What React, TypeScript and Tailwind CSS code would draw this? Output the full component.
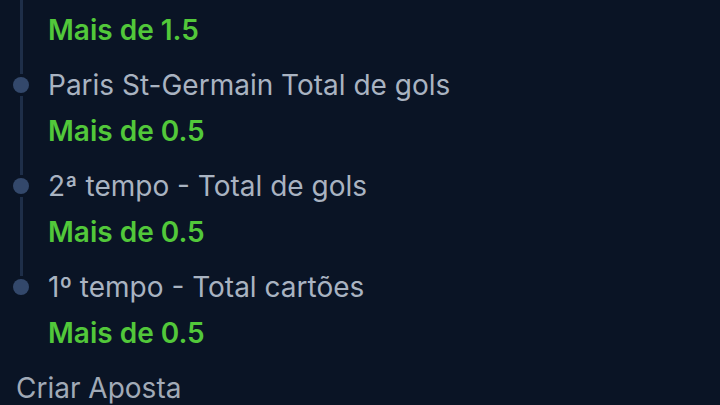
import React from 'react'

const items = [
  { title: '', value: 'Mais de 1.5' },
  { title: 'Paris St-Germain Total de gols', value: 'Mais de 0.5' },
  { title: '2ª tempo - Total de gols', value: 'Mais de 0.5' },
  { title: '1º tempo - Total cartões', value: 'Mais de 0.5' },
]

export default function App() {
  return (
    <div
      className="h-[405px] w-[720px] overflow-hidden bg-[#0a1425]"
      style={{ fontFamily: 'Inter, "Noto Sans", sans-serif' }}
    >
      <div className="-mt-[39px] flex flex-col">
        {items.map((it, i) => {
          const last = i === items.length - 1
          return (
            <div key={i} className="flex">
              {/* timeline rail */}
              <div className="flex w-[42px] shrink-0 flex-col items-center">
                <span className="h-[12px] w-[3px] bg-[#1e2e48]" />
                <span className="my-[3px] h-[16px] w-[16px] rounded-full bg-[#33486b]" />
                {!last && <span className="w-[3px] flex-1 bg-[#1e2e48]" />}
              </div>
              <div className="flex flex-col pl-[6px]">
                <div className="h-[46px] text-[28px] leading-[46px] text-[#a9b3c1]">{it.title}</div>
                <div className="pb-[9px] text-[28px] font-semibold leading-[46px] text-[#52c83a]">
                  {it.value}
                </div>
              </div>
            </div>
          )
        })}
        <div className="pl-[16px] text-[28px] leading-[46px] text-[#a1aab7]">Criar Aposta</div>
      </div>
    </div>
  )
}
